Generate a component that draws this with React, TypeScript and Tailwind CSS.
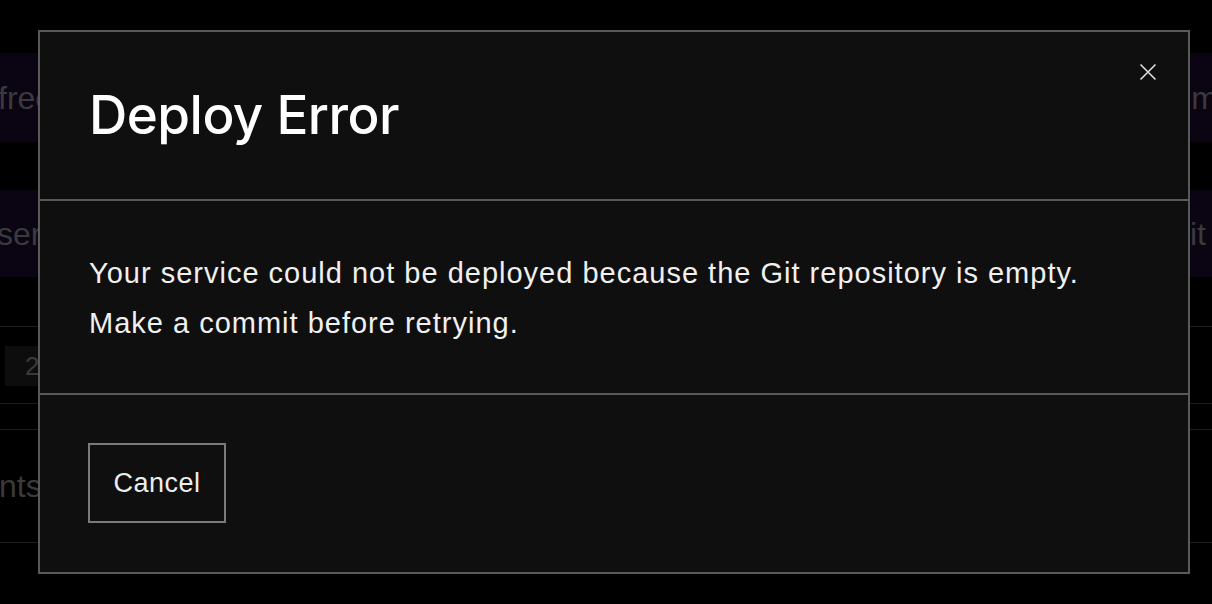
export default function App() {
  return (
    <div className="relative h-[604px] w-[1212px] overflow-hidden bg-black font-['Liberation_Sans',Arial,sans-serif]">
      {/* page behind the dialog */}
      <div className="flex flex-col pt-[53px]">
        <div className="flex h-[89px] items-center justify-between bg-[#0b0413] text-[32px] text-[#3a3a3a]">
          <span className="-ml-[2px]">free</span>
          <span className="mr-[-6px]">m</span>
        </div>
        <div className="mt-[48px] flex h-[87px] items-center justify-between bg-[#0b0413] text-[32px] text-[#3a3a3a]">
          <span className="-ml-[3px]">ser</span>
          <span className="mr-[6px]">it</span>
        </div>
        <div className="mt-[49px] border-t border-[#1c1c1c]">
          <div className="ml-[5px] mt-[19px] flex h-[40px] w-[200px] items-center bg-[#0d0d0d] pl-[20px] text-[26px] text-[#3a3a3a]">
            2
          </div>
        </div>
        <div className="mt-[17px] border-t border-[#1c1c1c]" />
        <div className="mt-[25px] flex h-[114px] items-center border-t border-b border-[#1c1c1c] text-[32px] text-[#3a3a3a]">
          <span className="-ml-[1px]">nts</span>
        </div>
      </div>

      {/* dialog */}
      <div className="absolute left-[38px] top-[30px] flex h-[544px] w-[1152px] flex-col border-2 border-[#595959] bg-[#0f0f0f]">
        <div className="relative flex h-[169px] items-center border-b-2 border-[#595959] px-[49px]">
          <h1 className="font-['Inter',sans-serif] text-[53px] font-medium tracking-[-0.01em] text-white">Deploy Error</h1>
          <button className="absolute right-[31px] top-[31px] text-[#dcdcdc]">
            <svg width="18" height="18" viewBox="0 0 18 18" fill="none" stroke="currentColor" strokeWidth="1.6">
              <path d="M1.5 1.5l15 15M16.5 1.5l-15 15" />
            </svg>
          </button>
        </div>
        <div className="h-[194px] border-b-2 border-[#595959] px-[49px] pt-[47px] text-[29px] leading-[50px] tracking-[1px] text-[#f0f0f0]">
          <p>Your service could not be deployed because the Git repository is empty.</p>
          <p>Make a commit before retrying.</p>
        </div>
        <div className="px-[48px] pt-[48px]">
          <button className="flex h-[80px] w-[138px] items-center justify-center border-2 border-[#7a7a7a] text-[27px] tracking-[0.5px] text-[#ececec]">
            Cancel
          </button>
        </div>
      </div>
    </div>
  );
}
